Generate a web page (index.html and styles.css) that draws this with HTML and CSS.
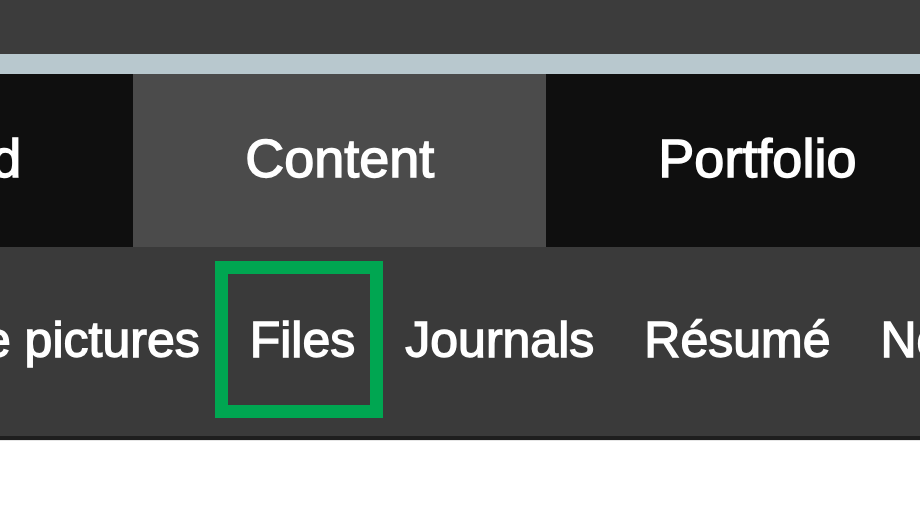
FILE: index.html
```html
<!DOCTYPE html>
<html lang="en">
<head>
<meta charset="utf-8">
<title>Content - Files</title>
<link rel="stylesheet" href="styles.css">
</head>
<body>
<header class="masthead">
  <div class="topbar"></div>
  <div class="stripe"></div>
  <nav class="main-nav">
    <ul class="tabs">
      <li class="tab"><a href="#">Dashboard</a></li>
      <li class="tab tab-active"><a href="#">Content</a></li>
      <li class="tab"><a href="#">Portfolio</a></li>
      <li class="tab"><a href="#">Groups</a></li>
    </ul>
  </nav>
  <nav class="sub-nav">
    <ul class="sub-items">
      <li class="sub-item"><a href="#">Profile pictures</a></li>
      <li class="sub-item sub-highlight"><a href="#">Files</a></li>
      <li class="sub-item"><a href="#">Journals</a></li>
      <li class="sub-item"><a href="#">Résumé</a></li>
      <li class="sub-item"><a href="#">Notes</a></li>
    </ul>
  </nav>
</header>
<main class="page"></main>
</body>
</html>
```
FILE: styles.css
```css
html, body {
  margin: 0;
  padding: 0;
  background: #ffffff;
  overflow: hidden;
}

body {
  font-family: "Liberation Sans", Arial, Helvetica, sans-serif;
  width: 920px;
  height: 518px;
}

ul {
  list-style: none;
  margin: 0;
  padding: 0;
}

a {
  color: #ffffff;
  text-decoration: none;
  -webkit-text-stroke: 1.4px #ffffff;
}

.topbar {
  height: 54px;
  background: #3c3c3c;
}

.stripe {
  height: 20px;
  background: #b8c8ce;
}

.main-nav {
  height: 173px;
  background: #0f0f0f;
  overflow: hidden;
}

.tabs {
  display: flex;
  height: 100%;
  margin-left: -355px;
  white-space: nowrap;
}

.tab {
  display: flex;
  align-items: center;
  padding: 0 112px 5px;
  background: #0f0f0f;
  font-size: 54px;
  flex-shrink: 0;
}

.tab-active {
  background: #4b4b4b;
}

.sub-nav {
  height: 189px;
  background: #3a3a3a;
  border-bottom: 4px solid #1e1e1e;
  box-shadow: 0 1px 0 #e6e6e6;
  overflow: hidden;
}

.sub-items {
  display: flex;
  height: 100%;
  margin-left: -156px;
  white-space: nowrap;
}

.sub-item {
  position: relative;
  display: flex;
  align-items: center;
  padding: 0 25px 3px;
  font-size: 50px;
  flex-shrink: 0;
}

.sub-highlight::after {
  content: "";
  position: absolute;
  left: -10px;
  right: -3px;
  top: 14px;
  bottom: 18px;
  border: 13px solid #00a651;
}

.page {
  height: 80px;
}
```
